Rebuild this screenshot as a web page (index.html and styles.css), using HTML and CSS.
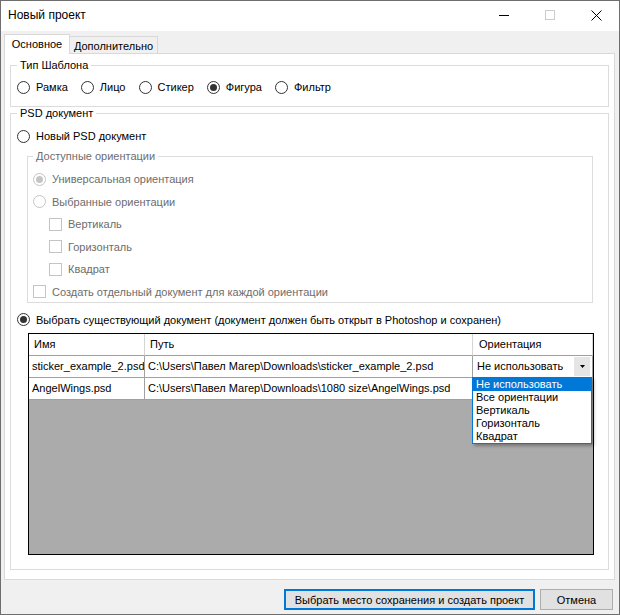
FILE: index.html
```html
<!doctype html>
<html>
    <head>
        <meta charset="UTF-8" />
        <meta name="viewport" content="width=device-width" />
        <title>Новый проект</title>
        <link rel="stylesheet" href="styles.css">
    </head>
    <body>
        <div class="window">
            <div class="titlebar">
                <span class="title">Новый проект</span>
                <div class="caption">
                    <span class="cap">
                        <svg width="10" height="10" viewBox="0 0 10 10"><line x1="0" y1="5.5" x2="10" y2="5.5" stroke="#000" stroke-width="1" /></svg>
                    </span>
                    <span class="cap">
                        <svg width="10" height="10" viewBox="0 0 10 10"><rect x="0.5" y="0.5" width="9" height="9" fill="none" stroke="#cccccc" stroke-width="1" /></svg>
                    </span>
                    <span class="cap">
                        <svg width="11" height="11" viewBox="0 0 11 11"><path d="M0.5 0.5 L10.5 10.5 M10.5 0.5 L0.5 10.5" stroke="#000" stroke-width="1" fill="none" /></svg>
                    </span>
                </div>
            </div>
            <div class="client">
                <div class="tabs">
                    <div class="tab active">Основное</div>
                    <div class="tab">Дополнительно</div>
                </div>
                <div class="tabpage">
                    <fieldset class="group typeGroup">
                        <legend>Тип Шаблона</legend>
                        <div class="radioLine">
                            <label class="radio"><span class="mark"></span>Рамка</label>
                            <label class="radio"><span class="mark"></span>Лицо</label>
                            <label class="radio"><span class="mark"></span>Стикер</label>
                            <label class="radio checked"><span class="mark"></span>Фигура</label>
                            <label class="radio"><span class="mark"></span>Фильтр</label>
                        </div>
                    </fieldset>
                    <fieldset class="group psdGroup">
                        <legend>PSD документ</legend>
                        <label class="radio row"><span class="mark"></span>Новый PSD документ</label>
                        <fieldset class="group orientGroup disabled">
                            <legend>Доступные ориентации</legend>
                            <label class="radio row checked"><span class="mark"></span>Универсальная ориентация</label>
                            <label class="radio row"><span class="mark"></span>Выбранные ориентации</label>
                            <label class="check row indent"><span class="box"></span>Вертикаль</label>
                            <label class="check row indent"><span class="box"></span>Горизонталь</label>
                            <label class="check row indent"><span class="box"></span>Квадрат</label>
                            <label class="check row"><span class="box"></span>Создать отдельный документ для каждой ориентации</label>
                        </fieldset>
                        <label class="radio row existing checked"><span class="mark"></span>Выбрать существующий документ (документ должен быть открыт в Photoshop и сохранен)</label>
                        <div class="grid">
                            <div class="gridRow header">
                                <div class="cell">Имя</div>
                                <div class="cell">Путь</div>
                                <div class="cell">Ориентация</div>
                            </div>
                            <div class="gridRow">
                                <div class="cell">sticker_example_2.psd</div>
                                <div class="cell">C:\Users\Павел Магер\Downloads\sticker_example_2.psd</div>
                                <div class="cell comboCell">
                                    <div class="combo">
                                        <span class="comboText">Не использовать</span>
                                        <span class="comboBtn">
                                            <svg width="5" height="3" viewBox="0 0 5 3"><path d="M0 0 H5 L2.5 3 Z" fill="#000" /></svg>
                                        </span>
                                    </div>
                                </div>
                            </div>
                            <div class="gridRow">
                                <div class="cell">AngelWings.psd</div>
                                <div class="cell">C:\Users\Павел Магер\Downloads\1080 size\AngelWings.psd</div>
                                <div class="cell"></div>
                            </div>
                            <ul class="dropList">
                                <li class="selected">Не использовать</li>
                                <li>Все ориентации</li>
                                <li>Вертикаль</li>
                                <li>Горизонталь</li>
                                <li>Квадрат</li>
                            </ul>
                        </div>
                    </fieldset>
                </div>
                <div class="actions">
                    <button class="btn btnDefault">Выбрать место сохранения и создать проект</button>
                    <button class="btn btnCancel">Отмена</button>
                </div>
            </div>
        </div>
    </body>
</html>
```

FILE: styles.css
```css
* {
    box-sizing: border-box;
}
html,
body {
    margin: 0;
    background-color: #fff;
}
body {
    font-family: "Liberation Sans", Arial, sans-serif;
    font-size: 11px;
    color: #000;
}
.window {
    width: 620px;
    height: 615px;
    border: 1px solid #6e6e6e;
    background-color: #f0f0f0;
    display: flex;
    flex-direction: column;
}
.titlebar {
    height: 30px;
    background-color: #fff;
    display: flex;
    align-items: center;
}
.title {
    flex: 1;
    font-size: 12px;
    padding-left: 7px;
    padding-bottom: 2px;
}
.caption {
    display: flex;
    height: 30px;
}
.cap {
    width: 46px;
    height: 30px;
    display: flex;
    align-items: center;
    justify-content: center;
    padding-bottom: 2px;
}
.client {
    flex: 1;
    display: flex;
    flex-direction: column;
}
.tabs {
    height: 22px;
    padding-left: 3px;
    display: flex;
    align-items: flex-end;
}
.tab {
    width: 88px;
    height: 17px;
    border: 1px solid #d9d9d9;
    border-left: none;
    border-bottom: none;
    display: flex;
    justify-content: center;
    align-items: center;
    padding-top: 1px;
}
.tab.active {
    width: 66px;
    height: 20px;
    margin-bottom: -1px;
    border-left: 1px solid #d9d9d9;
    background-color: #fff;
    position: relative;
    z-index: 1;
    padding-top: 0;
    padding-bottom: 1px;
}
.tabpage {
    margin-left: 3px;
    width: 611px;
    height: 527px;
    border: 1px solid #d9d9d9;
    background-color: #fff;
    padding: 5px 5px 0;
}

/* group boxes */
.group {
    margin: 0;
    min-width: 0;
    border: 1px solid #dcdcdc;
    padding: 0 6px;
}
.group legend {
    padding: 0 3px;
    height: 13px;
    line-height: 13px;
}
.typeGroup {
    padding-top: 7px;
    padding-bottom: 11px;
}
.psdGroup {
    padding-top: 8px;
    padding-bottom: 14px;
}
.orientGroup {
    margin: 6px 9px 0 10px;
    padding: 8px 5px 2px;
    display: flex;
    flex-direction: column;
    gap: 6.6px;
}
.disabled,
.disabled legend {
    color: #6d6d6d;
}

/* radio buttons and check boxes */
.radioLine {
    display: flex;
    gap: 13px;
    height: 16px;
    align-items: center;
}
.radio,
.check {
    display: flex;
    align-items: center;
    gap: 6px;
    height: 16px;
    white-space: nowrap;
}
.mark {
    width: 13px;
    height: 13px;
    border: 1px solid #333;
    border-radius: 50%;
    background-color: #fff;
    display: flex;
    align-items: center;
    justify-content: center;
}
.checked .mark:after {
    content: "";
    width: 7px;
    height: 7px;
    border-radius: 50%;
    background-color: #333;
}
.box {
    width: 13px;
    height: 13px;
    border: 1px solid #333;
    background-color: #fff;
}
.disabled .mark,
.disabled .box {
    border-color: #c4c4c4;
}
.disabled .checked .mark:after {
    background-color: #c4c4c4;
}
.indent {
    margin-left: 16px;
}
.existing {
    margin-top: 9px;
}

/* data grid */
.grid {
    position: relative;
    margin: 5px 0 0 11px;
    width: 566px;
    height: 222px;
    border: 1px solid #000;
    background-color: #ababab;
}
.gridRow {
    display: grid;
    grid-template-columns: 116px 328px 120px;
    height: 22px;
    background-color: #fff;
}
.cell {
    border-right: 1px solid #a0a0a0;
    border-bottom: 1px solid #a0a0a0;
    padding-left: 3px;
    display: flex;
    align-items: center;
    white-space: nowrap;
    overflow: hidden;
}
.header .cell {
    padding-left: 5px;
    border-right-color: #d5d5d5;
}
.header .cell:last-child {
    padding-left: 6px;
}
.comboCell {
    padding: 0;
    align-items: stretch;
}
.combo {
    flex: 1;
    display: flex;
    align-items: center;
    padding: 1px 1px 1px 4px;
}
.comboText {
    flex: 1;
}
.comboBtn {
    width: 16px;
    height: 19px;
    background-color: #e5e5e5;
    display: flex;
    align-items: center;
    justify-content: center;
    margin-right: 1px;
}
.dropList {
    position: absolute;
    left: 443px;
    top: 43px;
    width: 120px;
    margin: 0;
    padding: 0;
    list-style: none;
    background-color: #fff;
    border: 1px solid #0078d7;
    box-shadow: 2px 2px 3px rgba(0, 0, 0, 0.3);
}
.dropList li {
    height: 13px;
    line-height: 13px;
    padding-left: 3px;
}
.dropList li.selected {
    background-color: #0078d7;
    color: #fff;
}

/* buttons */
.actions {
    display: flex;
    justify-content: flex-end;
    gap: 5px;
    padding: 9px 6px 0 0;
}
.btn {
    height: 21px;
    padding: 0;
    margin: 0;
    font-family: inherit;
    font-size: 11px;
    color: #000;
    background-color: #e1e1e1;
    border: 1px solid #adadad;
}
.btnDefault {
    width: 251px;
    border: 2px solid #0078d7;
}
.btnCancel {
    width: 73px;
}
```
